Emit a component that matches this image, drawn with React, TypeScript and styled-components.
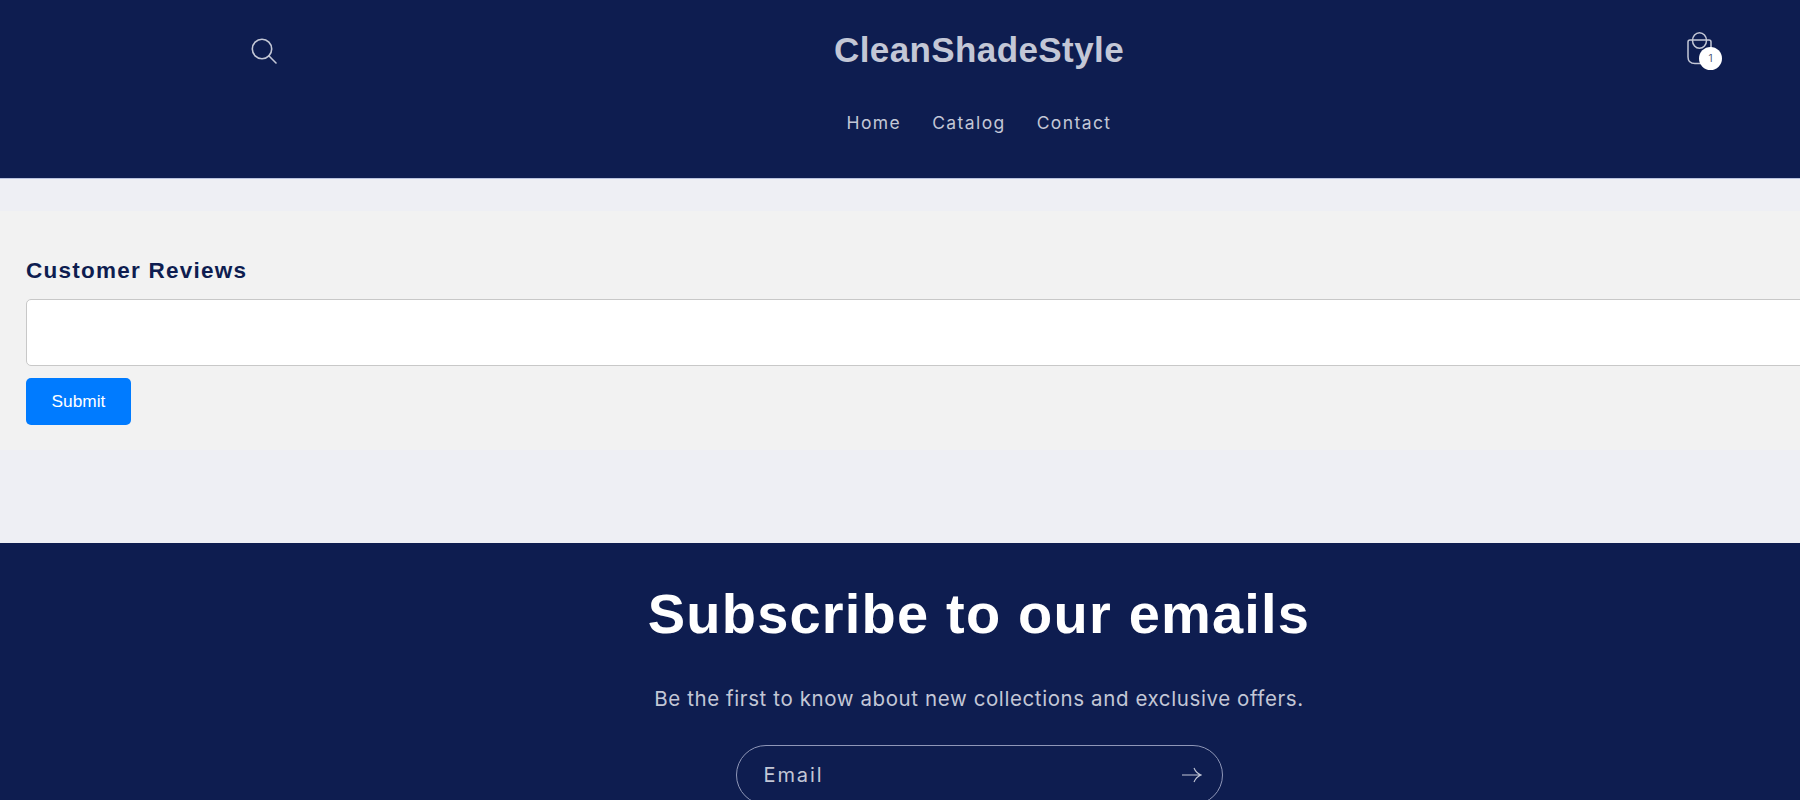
import styled, { createGlobalStyle } from "styled-components";

const GlobalStyle = createGlobalStyle`
  html, body {
    margin: 0;
    padding: 0;
    overflow: hidden;
    height: 800px;
    background: #eeeff4;
  }
`;

const navy = "#0e1d50";
const soft = "#c3c7d6";
const bodyFont = `"Inter", "Noto Sans", sans-serif`;
const headFont = `"Liberation Sans", Arial, sans-serif`;

const Page = styled.div`
  width: 1958px;
  display: flex;
  flex-direction: column;
`;

const Header = styled.header`
  height: 178px;
  box-sizing: content-box;
  background: ${navy};
  border-bottom: 1px solid #b9c2de;
  display: flex;
  flex-direction: column;
  align-items: center;
`;

const TopRow = styled.div`
  width: 100%;
  box-sizing: border-box;
  padding: 28px 239px 0;
  display: grid;
  grid-template-columns: 1fr auto 1fr;
  align-items: center;
`;

const SearchIcon = styled.svg`
  margin: 2px 0 0 12px;
`;

const Logo = styled.div`
  font-family: ${headFont};
  font-weight: 700;
  font-size: 35px;
  line-height: 44px;
  letter-spacing: 0.4px;
  color: ${soft};
`;

const CartWrap = styled.div`
  position: relative;
  justify-self: end;
  width: 26px;
  height: 34px;
  margin: 0 6px 3px 0;
`;

const CartBadge = styled.span`
  position: absolute;
  left: 12px;
  top: 15px;
  width: 23px;
  height: 23px;
  border-radius: 50%;
  background: #fff;
  color: #4a5578;
  font-family: ${bodyFont};
  font-size: 10px;
  display: flex;
  align-items: center;
  justify-content: center;
`;

const Nav = styled.nav`
  margin-top: 39px;
  display: flex;
  gap: 31px;
`;

const NavLink = styled.a`
  font-family: ${bodyFont};
  font-size: 17.5px;
  line-height: 24px;
  letter-spacing: 1.4px;
  color: ${soft};
`;

const Main = styled.main`
  height: 364px;
  padding-top: 32px;
  box-sizing: border-box;
  background: #eeeff4;
`;

const ReviewSection = styled.section`
  background: #f2f2f2;
  height: 239px;
  padding: 45px 26px 0;
  box-sizing: border-box;
  display: flex;
  flex-direction: column;
  align-items: flex-start;
`;

const ReviewTitle = styled.h2`
  margin: 0 0 14px;
  font-family: ${headFont};
  font-weight: 700;
  font-size: 22.5px;
  line-height: 29px;
  letter-spacing: 1.25px;
  color: ${navy};
`;

const ReviewInput = styled.textarea`
  display: block;
  width: 100%;
  height: 67px;
  box-sizing: border-box;
  border: 1px solid #c8c8c8;
  border-radius: 5px;
  background: #fff;
  resize: none;
  outline: none;
  padding: 10px;
`;

const SubmitButton = styled.button`
  margin-top: 12px;
  width: 105px;
  height: 47px;
  border: none;
  border-radius: 5px;
  background: #007bff;
  color: #fff;
  font-family: ${headFont};
  font-size: 17.3px;
  padding: 0;
`;

const Footer = styled.footer`
  background: ${navy};
  height: 257px;
  display: flex;
  flex-direction: column;
  align-items: center;
  padding-top: 37px;
  box-sizing: border-box;
`;

const SubscribeTitle = styled.h2`
  margin: 0;
  font-family: ${headFont};
  font-weight: 700;
  font-size: 56px;
  line-height: 68px;
  letter-spacing: 1.2px;
  color: #fff;
`;

const SubscribeText = styled.p`
  margin: 37px 0 0;
  font-family: ${bodyFont};
  font-size: 20.5px;
  line-height: 28px;
  letter-spacing: 0.6px;
  color: ${soft};
`;

const EmailField = styled.div`
  margin-top: 32px;
  width: 487px;
  height: 60px;
  box-sizing: border-box;
  border: 1px solid #8f97b8;
  border-radius: 30px;
  padding: 0 20px 0 27px;
  display: flex;
  align-items: center;
  justify-content: space-between;
  flex-shrink: 0;
`;

const EmailLabel = styled.span`
  font-family: ${bodyFont};
  font-size: 20px;
  letter-spacing: 1.9px;
  color: ${soft};
`;

function App() {
  return (
    <>
      <GlobalStyle />
      <Page>
        <Header>
          <TopRow>
            <SearchIcon width="26" height="26" viewBox="0 0 26 26" fill="none" stroke={soft} strokeWidth="1.6">
              <circle cx="11" cy="11" r="9.7" />
              <path d="M17.8 17.8 L25 25" strokeLinecap="round" />
            </SearchIcon>
            <Logo>CleanShadeStyle</Logo>
            <CartWrap>
              <svg width="26" height="34" viewBox="0 0 26 34" fill="none" stroke={soft} strokeWidth="1.5">
                <path d="M3 8 H22 Q24 8 24 10 V27 Q24 31.5 20 31.5 H8 Q1 31.5 1 25 V10 Q1 8 3 8 Z" />
                <ellipse cx="12.5" cy="8.5" rx="7" ry="7.7" />
              </svg>
              <CartBadge>1</CartBadge>
            </CartWrap>
          </TopRow>
          <Nav>
            <NavLink>Home</NavLink>
            <NavLink>Catalog</NavLink>
            <NavLink>Contact</NavLink>
          </Nav>
        </Header>
        <Main>
          <ReviewSection>
            <ReviewTitle>Customer Reviews</ReviewTitle>
            <ReviewInput />
            <SubmitButton>Submit</SubmitButton>
          </ReviewSection>
        </Main>
        <Footer>
          <SubscribeTitle>Subscribe to our emails</SubscribeTitle>
          <SubscribeText>Be the first to know about new collections and exclusive offers.</SubscribeText>
          <EmailField>
            <EmailLabel>Email</EmailLabel>
            <svg width="20" height="16" viewBox="0 0 20 16" fill="none" stroke={soft} strokeWidth="1.1">
              <path d="M0 8 H19 M12 1 Q14 6 19 8 Q14 10 12 15" />
            </svg>
          </EmailField>
        </Footer>
      </Page>
    </>
  );
}

export default App;
